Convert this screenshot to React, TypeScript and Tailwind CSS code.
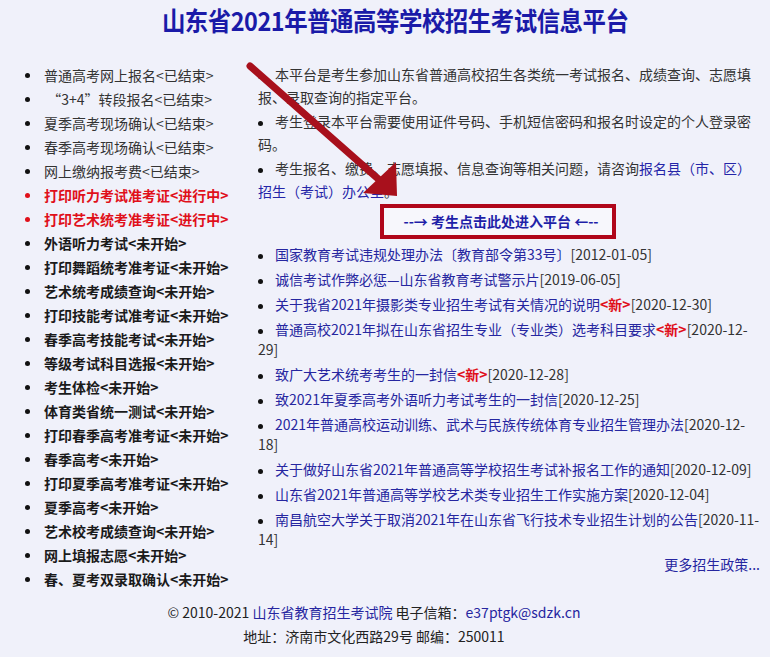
import React from "react";

type Item = { text: string; status: string; kind: "done" | "active" | "todo" };

const leftItems: Item[] = [
  { text: "普通高考网上报名", status: "<已结束>", kind: "done" },
  { text: "\u00a0“3+4”转段报名", status: "<已结束>", kind: "done" },
  { text: "夏季高考现场确认", status: "<已结束>", kind: "done" },
  { text: "春季高考现场确认", status: "<已结束>", kind: "done" },
  { text: "网上缴纳报考费", status: "<已结束>", kind: "done" },
  { text: "打印听力考试准考证", status: "<进行中>", kind: "active" },
  { text: "打印艺术统考准考证", status: "<进行中>", kind: "active" },
  { text: "外语听力考试", status: "<未开始>", kind: "todo" },
  { text: "打印舞蹈统考准考证", status: "<未开始>", kind: "todo" },
  { text: "艺术统考成绩查询", status: "<未开始>", kind: "todo" },
  { text: "打印技能考试准考证", status: "<未开始>", kind: "todo" },
  { text: "春季高考技能考试", status: "<未开始>", kind: "todo" },
  { text: "等级考试科目选报", status: "<未开始>", kind: "todo" },
  { text: "考生体检", status: "<未开始>", kind: "todo" },
  { text: "体育类省统一测试", status: "<未开始>", kind: "todo" },
  { text: "打印春季高考准考证", status: "<未开始>", kind: "todo" },
  { text: "春季高考", status: "<未开始>", kind: "todo" },
  { text: "打印夏季高考准考证", status: "<未开始>", kind: "todo" },
  { text: "夏季高考", status: "<未开始>", kind: "todo" },
  { text: "艺术校考成绩查询", status: "<未开始>", kind: "todo" },
  { text: "网上填报志愿", status: "<未开始>", kind: "todo" },
  { text: "春、夏考双录取确认", status: "<未开始>", kind: "todo" },
];

const news = [
  { title: "国家教育考试违规处理办法〔教育部令第33号〕", date: "[2012-01-05]" },
  { title: "诚信考试作弊必惩—山东省教育考试警示片", date: "[2019-06-05]" },
  { title: "关于我省2021年摄影类专业招生考试有关情况的说明", date: "[2020-12-30]", isNew: true },
  { title: "普通高校2021年拟在山东省招生专业（专业类）选考科目要求", date: "[2020-12-29]", isNew: true },
  { title: "致广大艺术统考考生的一封信", date: "[2020-12-28]", isNew: true },
  { title: "致2021年夏季高考外语听力考试考生的一封信", date: "[2020-12-25]" },
  { title: "2021年普通高校运动训练、武术与民族传统体育专业招生管理办法", date: "[2020-12-18]" },
  { title: "关于做好山东省2021年普通高等学校招生考试补报名工作的通知", date: "[2020-12-09]" },
  { title: "山东省2021年普通高等学校艺术类专业招生工作实施方案", date: "[2020-12-04]" },
  { title: "南昌航空大学关于取消2021年在山东省飞行技术专业招生计划的公告", date: "[2020-11-14]" },
];

const font = { fontFamily: '"Microsoft YaHei", "Noto Sans CJK SC", "Noto Sans", sans-serif' };

// round list marker, drawn as a css dot
function Dot() {
  return <span className="mr-[12px] inline-block h-[5px] w-[5px] rounded-full bg-[#111] align-middle" />;
}

export default function App() {
  return (
    <div className="relative min-h-[657px] w-[770px] bg-[#f0f1fa] text-[14px] text-[#333]" style={font}>
      <h1 className="pt-[3px] pl-[20px] text-center text-[26px] font-bold leading-[34px] text-[#1a1aa8]">
        <span className="inline-block scale-x-[0.9] tracking-[-0.5px]">山东省2021年普通高等学校招生考试信息平台</span>
      </h1>

      <div className="mt-[26px] flex">
        {/* left status list */}
        <ul className="w-[258px] shrink-0 pl-[25px]">
          {leftItems.map((it, i) => (
            <li
              key={i}
              className={
                "flex h-[24px] items-center whitespace-nowrap leading-[24px] " +
                (it.kind === "active"
                  ? "font-bold text-[#e0101a]"
                  : it.kind === "todo"
                  ? "font-bold text-[#1a1a1a]"
                  : "text-[#333]")
              }
            >
              <span
                className={
                  "mr-[14px] inline-block h-[5px] w-[5px] rounded-full " +
                  (it.kind === "active" ? "bg-[#e0101a]" : "bg-[#111]")
                }
              />
              <span>
                {it.text}
                {it.status}
              </span>
            </li>
          ))}
        </ul>

        {/* right content */}
        <div className="w-[504px] shrink-0">
          <div className="flex flex-col gap-[1px] leading-[23px]">
            <p>
              <Dot />
              本平台是考生参加山东省普通高校招生各类统一考试报名、成绩查询、志愿填报、录取查询的指定平台。
            </p>
            <p>
              <Dot />
              考生登录本平台需要使用证件号码、手机短信密码和报名时设定的个人登录密码。
            </p>
            <p>
              <Dot />
              考生报名、缴费、志愿填报、信息查询等相关问题，请咨询
              <a className="text-[#2525a8]">报名县（市、区）招生（考试）办公室</a>。
            </p>
          </div>

          <div className="ml-[122px] mt-[1px] flex h-[35px] w-[236px] items-center justify-center border-[4px] border-[#b0061a] bg-[#f7f7fc] pl-[6px] text-[14px] font-bold text-[#1f1fa8]">
            --→ 考生点击此处进入平台 ←--
          </div>

          <ul className="mt-[5px] flex flex-col gap-[5px] leading-[20px]">
            {news.map((n, i) => (
              <li key={i}>
                <Dot />
                <a className="text-[#2626a0]">{n.title}</a>
                {n.isNew && <span className="font-bold text-[#e0101a]">&lt;新&gt;</span>}
                <span className="text-[#333]">{n.date}</span>
              </li>
            ))}
          </ul>
          <div className="mt-[5px] pr-[2px] text-right leading-[20px] text-[#2626a0]">更多招生政策...</div>
        </div>
      </div>

      <footer className="mt-[9px] pr-[22px] text-center leading-[24px] text-[#222]">
        <div>
          © 2010-2021 <span className="text-[#2626a0]">山东省教育招生考试院</span> 电子信箱：
          <span className="text-[#2626a0]">e37ptgk@sdzk.cn</span>
        </div>
        <div>地址：济南市文化西路29号 邮编：250011</div>
      </footer>

      {/* red annotation arrow drawn over the page */}
      <svg className="pointer-events-none absolute left-0 top-0" width="770" height="657">
        <line x1="250" y1="66" x2="384" y2="184" stroke="#a8101c" strokeWidth="7" strokeLinecap="round" />
        <polygon points="397,196 396,162 363,193" fill="#a8101c" />
      </svg>
    </div>
  );
}
